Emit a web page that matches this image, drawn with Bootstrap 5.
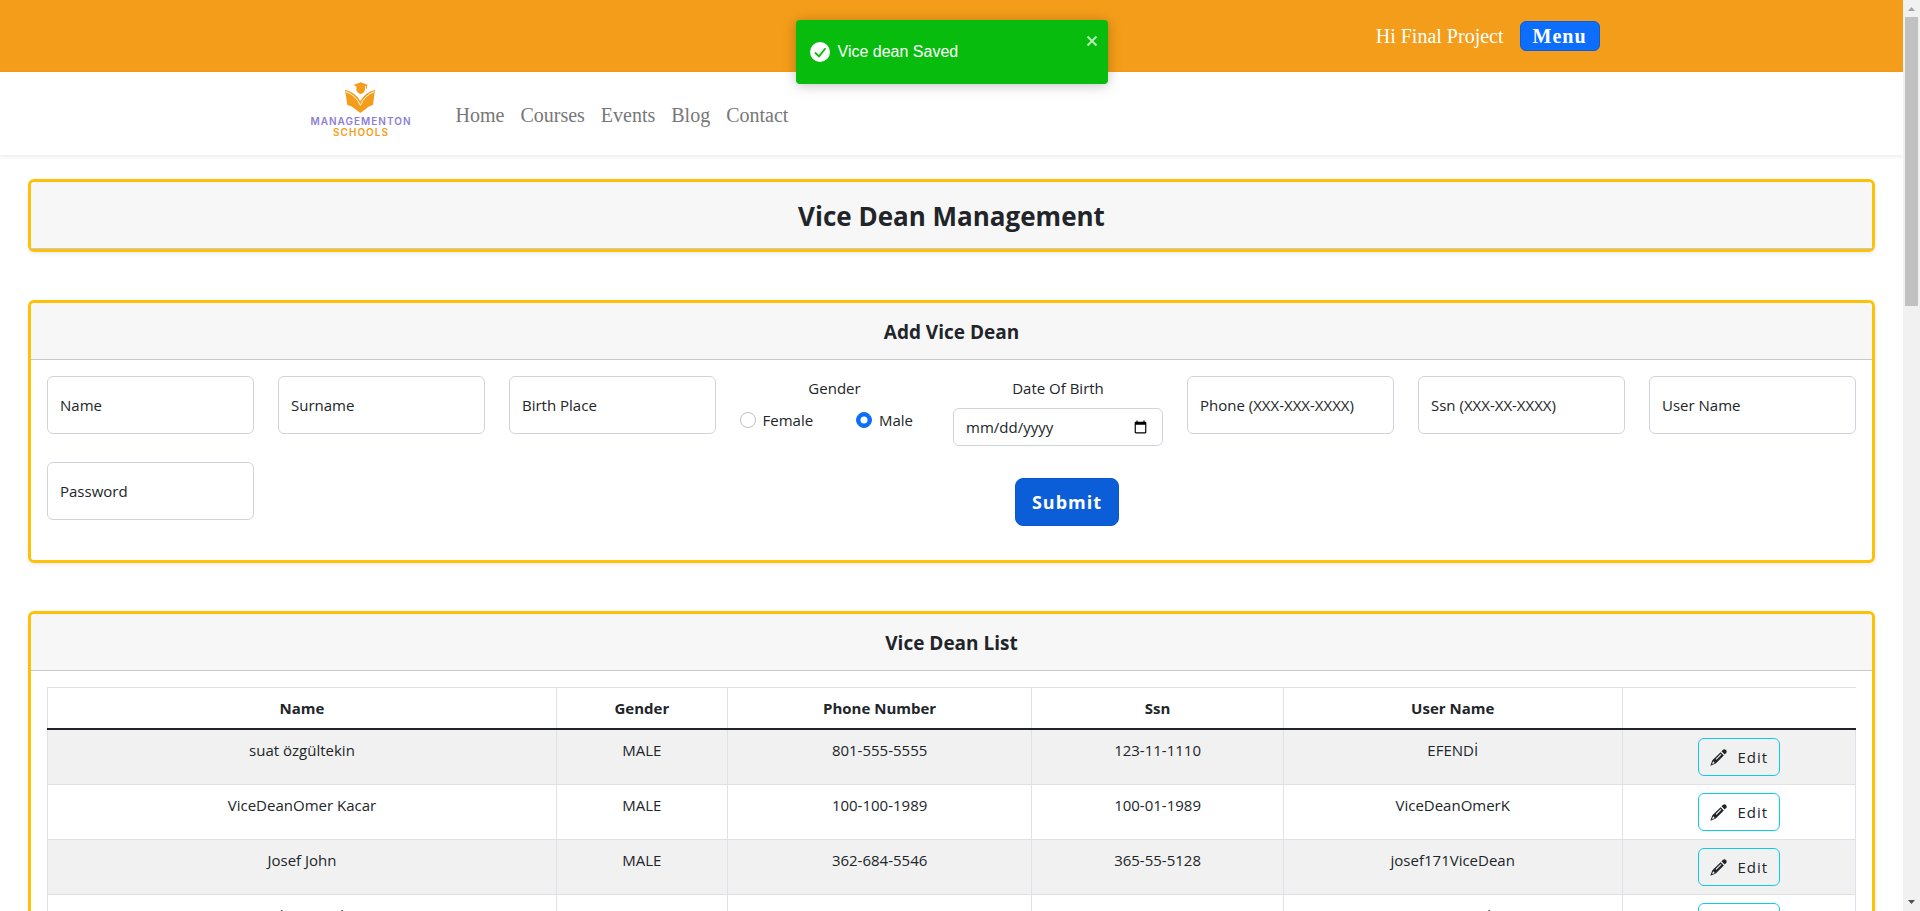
<!DOCTYPE html>
<html lang="en">
<head>
<meta charset="utf-8">
<meta name="viewport" content="width=device-width, initial-scale=1">
<title>Vice Dean Management</title>
<link href="https://cdn.jsdelivr.net/npm/bootstrap@5.3.0/dist/css/bootstrap.min.css" rel="stylesheet">
<style>
  body { font-family: "Open Sans", "Noto Sans", sans-serif; font-size: 15px; line-height: 24px; }
  .topbar { background: #f49d1a; height: 72px; font-family: "Liberation Serif", serif; font-size: 20px; }
  .menu-btn { font-weight: 700; font-size: 20px; line-height: 28px; letter-spacing: 1px; padding: 0 12px; border: 1px solid #0b5ed7; }
  .brandbar { height: 83px; box-shadow: 0 2px 4px rgba(0,0,0,.075); font-family: "Liberation Serif", serif; font-size: 20px; }
  .brandbar .nav-link { color: #777; padding: 2px 8px 0; }
  .logo { width: 112px; height: 64px; }
  .logo text { font-family: Inter, sans-serif; font-weight: 600; font-size: 10px; letter-spacing: 1px; }
  .frame { border: 3px solid #ffc107; box-shadow: 0 2px 4px rgba(0,0,0,.075); }
  .frame > .card-header { background: #f7f7f7; border-bottom-color: #c8c9ca; text-align: center; padding: 17px 16px 15px; }
  .title-lg { font-size: 26px; line-height: 34px; font-weight: 700; }
  .title-md { font-size: 19px; line-height: 24px; font-weight: 700; }
  .form-body { padding-bottom: 34px; }
  .fields { display: grid; grid-template-columns: repeat(3, minmax(0, 207fr)) minmax(0, 189fr) minmax(0, 210fr) repeat(3, minmax(0, 207fr)); column-gap: 24px; row-gap: 16px; }
  .fields .form-control { font-size: 15px; border-color: #ced4da; }
  .fields .form-floating > .form-control { height: 58px; }
  .fields .form-floating > label { padding: 16px 12px; color: #212529; white-space: nowrap; }
  .fields .form-check-input { width: 16px; height: 16px; margin-top: 4px; }
  .fields .form-check-input:not(:checked) { border-color: #bfbfbf; }
  .date-box .form-control { height: 38px; }
  .submit-cell { grid-column: 2 / -1; padding-top: 16px; text-align: center; }
  .submit-btn { background: #0b5ed7; border-color: #0a58ca; font-weight: 700; font-size: 18px; line-height: 30px; letter-spacing: 1px; padding: 8px 16px; border-radius: 8px; }
  .people { table-layout: fixed; font-size: 15px; --bs-table-striped-bg: #f1f1f1; }
  .people > thead > tr > th { font-weight: 700; border-bottom: 2px solid #212529; }
  .people > tbody > tr > td { height: 55px; }
  .w-name { width: 28.15%; } .w-gender { width: 9.45%; } .w-phone { width: 16.85%; } .w-ssn { width: 13.9%; } .w-user { width: 18.75%; }
  .edit-btn { color: #212529; font-size: 15px; line-height: 24px; letter-spacing: 1px; padding: 6px 11px; border: 1px solid #0dcaf0; display: inline-flex; align-items: center; gap: 11px; }
  .notice { top: 20px; left: 50%; width: 312px; height: 64px; margin-left: -156px; padding-left: 14px; background: #07bc0c; border-radius: 4px; box-shadow: 0 1px 10px rgba(0,0,0,.1), 0 2px 15px rgba(0,0,0,.15); font-family: "Liberation Sans", sans-serif; font-size: 16px; z-index: 10; }
  .notice-close { top: 14px; right: 9px; opacity: .7; }
  .rail { width: 17px; background: #f1f1f1; }
  .rail svg { width: 17px; height: 17px; }
  .rail-thumb { height: 31.7%; margin: 0 2px; background: #c1c1c1; }
</style>
</head>
<body>
<svg class="d-none" aria-hidden="true">
  <symbol id="pencil" viewBox="0 0 16 16">
    <path d="M10.800 2.200 12.300.8q1.400-1.200 2.700.2t.2 2.700L13.800 5.200z"/>
    <path fill-rule="evenodd" d="M10 3 13 6 5.400 13.700.3 15.700l1.900-5zM10 4.700 5.300 9.400l.7.700L10.700 5.400zM3 11.500l-1 2.400.3.300 2.300-1z"/>
  </symbol>
</svg>
<div class="d-flex vh-100 overflow-hidden">
  <div class="flex-grow-1 overflow-hidden position-relative">
    <header>
      <div class="topbar text-white">
        <div class="container h-100 d-flex justify-content-end align-items-center gap-3">
          <span>Hi Final Project</span>
          <button type="button" class="btn btn-primary menu-btn">Menu</button>
        </div>
      </div>
      <nav class="brandbar bg-white">
        <div class="container h-100 d-flex align-items-center">
          <a href="#" class="d-block me-4 pe-2" aria-label="Managementon Schools">
            <svg class="logo d-block" viewBox="0 -2 112 64">
              <g transform="translate(-4 -9) scale(.33333)">
                <path fill="#f49d1a" d="M182 22 160 30l9 4v10q3 11 13 13 10-2 13-13V34l3-1v8h3v-9l3-2z"/>
                <path fill="#f49d1a" d="M135 44q32 9 46 33 14-24 44-33l-6 46-11 4-27 20-27-20-12-4z"/>
                <path fill="none" stroke="#fff" stroke-width="3" d="M138 50q30 11 43 41 13-30 41-41"/>
                <path fill="none" stroke="#fff" stroke-width="3" d="M149 44q22 9 32 32 11-23 31-32"/>
              </g>
              <text x="57" y="41" text-anchor="middle" fill="#8c7ed6">MANAGEMENTON</text>
              <text x="57" y="52" text-anchor="middle" fill="#f49d1a">SCHOOLS</text>
            </svg>
          </a>
          <div class="nav">
            <a class="nav-link" href="#">Home</a>
            <a class="nav-link" href="#">Courses</a>
            <a class="nav-link" href="#">Events</a>
            <a class="nav-link" href="#">Blog</a>
            <a class="nav-link" href="#">Contact</a>
          </div>
        </div>
      </nav>
    </header>

    <div class="notice position-absolute d-flex align-items-center gap-2 text-white" role="alert">
      <svg width="20" height="20" viewBox="0 0 20 20"><circle cx="10" cy="10" r="10" fill="#fff"/><path d="M5 10.500 9 14.300 15.500 6.200" fill="none" stroke="#07bc0c" stroke-width="1.800"/></svg>
      <span>Vice dean Saved</span>
      <button type="button" class="notice-close position-absolute btn p-0 border-0 d-flex" aria-label="Close">
        <svg width="14" height="14" viewBox="0 0 14 14"><path d="M2.500 2.500l9 9M11.500 2.500l-9 9" stroke="#fff" stroke-width="2"/></svg>
      </button>
    </div>

    <main class="px-4 pt-4 mx-1 d-flex flex-column gap-5">
      <section class="card frame">
        <div class="card-header"><h1 class="title-lg m-0">Vice Dean Management</h1></div>
      </section>

      <section class="card frame">
        <div class="card-header"><h2 class="title-md m-0">Add Vice Dean</h2></div>
        <form class="card-body form-body">
          <div class="fields">
            <div class="form-floating"><input class="form-control" id="fName" placeholder="Name"><label for="fName">Name</label></div>
            <div class="form-floating"><input class="form-control" id="fSurname" placeholder="Surname"><label for="fSurname">Surname</label></div>
            <div class="form-floating"><input class="form-control" id="fPlace" placeholder="Birth Place"><label for="fPlace">Birth Place</label></div>
            <div class="text-center" role="radiogroup" aria-labelledby="gLabel">
              <div id="gLabel" class="mb-2">Gender</div>
              <div class="d-flex justify-content-between pe-3">
                <div class="form-check mb-0"><input class="form-check-input" type="radio" name="gender" id="gF"><label class="form-check-label" for="gF">Female</label></div>
                <div class="form-check mb-0"><input class="form-check-input" type="radio" name="gender" id="gM" checked><label class="form-check-label" for="gM">Male</label></div>
              </div>
            </div>
            <div class="date-box text-center">
              <label for="fDate" class="mb-2">Date Of Birth</label>
              <input type="date" class="form-control" id="fDate">
            </div>
            <div class="form-floating"><input class="form-control" id="fPhone" placeholder="Phone"><label for="fPhone">Phone (XXX-XXX-XXXX)</label></div>
            <div class="form-floating"><input class="form-control" id="fSsn" placeholder="Ssn"><label for="fSsn">Ssn (XXX-XX-XXXX)</label></div>
            <div class="form-floating"><input class="form-control" id="fUser" placeholder="User Name"><label for="fUser">User Name</label></div>
            <div class="form-floating"><input type="password" class="form-control" id="fPass" placeholder="Password"><label for="fPass">Password</label></div>
            <div class="submit-cell"><button type="submit" class="btn btn-primary submit-btn">Submit</button></div>
          </div>
        </form>
      </section>

      <section class="card frame">
        <div class="card-header"><h2 class="title-md m-0">Vice Dean List</h2></div>
        <div class="card-body">
          <table class="table table-striped table-bordered text-center people">
            <thead>
              <tr><th class="w-name">Name</th><th class="w-gender">Gender</th><th class="w-phone">Phone Number</th><th class="w-ssn">Ssn</th><th class="w-user">User Name</th><th class="border-end-0"></th></tr>
            </thead>
            <tbody>
              <tr><td>suat özgültekin</td><td>MALE</td><td>801-555-5555</td><td>123-11-1110</td><td>EFENDİ</td><td><button type="button" class="btn edit-btn"><svg width="17" height="17" fill="currentColor"><use href="#pencil"/></svg>Edit</button></td></tr>
              <tr><td>ViceDeanOmer Kacar</td><td>MALE</td><td>100-100-1989</td><td>100-01-1989</td><td>ViceDeanOmerK</td><td><button type="button" class="btn edit-btn"><svg width="17" height="17" fill="currentColor"><use href="#pencil"/></svg>Edit</button></td></tr>
              <tr><td>Josef John</td><td>MALE</td><td>362-684-5546</td><td>365-55-5128</td><td>josef171ViceDean</td><td><button type="button" class="btn edit-btn"><svg width="17" height="17" fill="currentColor"><use href="#pencil"/></svg>Edit</button></td></tr>
              <tr><td>Angela Gonzalez</td><td>FEMALE</td><td>305-630-0625</td><td>485-28-8633</td><td>VDeanAngela</td><td><button type="button" class="btn edit-btn"><svg width="17" height="17" fill="currentColor"><use href="#pencil"/></svg>Edit</button></td></tr>
            </tbody>
          </table>
        </div>
      </section>
    </main>
  </div>
  <div class="rail flex-shrink-0 d-flex flex-column" aria-hidden="true">
    <svg class="flex-shrink-0" viewBox="0 0 17 17"><path d="M5 11 8.500 7 12 11z" fill="#a3a3a3"/></svg>
    <div class="rail-thumb"></div>
    <svg class="flex-shrink-0 mt-auto" viewBox="0 0 17 17"><path d="M5 6 8.500 10 12 6z" fill="#505050"/></svg>
  </div>
</div>
<script src="https://cdn.jsdelivr.net/npm/bootstrap@5.3.0/dist/js/bootstrap.bundle.min.js"></script>
</body>
</html>
